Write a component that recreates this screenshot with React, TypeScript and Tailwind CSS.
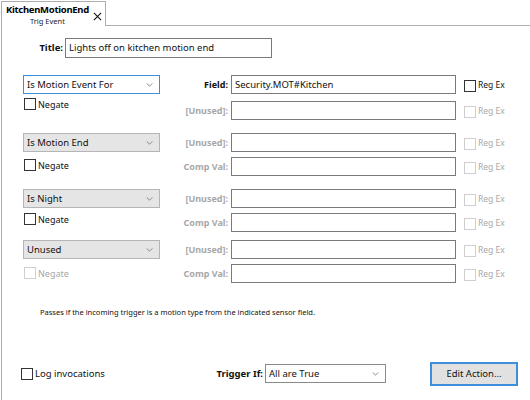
import React from 'react';

type Cond = {
  op: string;
  active?: boolean;
  negDisabled?: boolean;
  l1: string;
  l2: string;
  l1On?: boolean;
  v1?: string;
  gap: string;
  rowGap: string;
  negOffset: string;
};

const conds: Cond[] = [
  { op: 'Is Motion Event For', active: true, l1: 'Field:', l2: '[Unused]:', l1On: true, v1: 'Security.MOT#Kitchen', gap: 'mt-[17px]', rowGap: 'gap-[7px]', negOffset: 'mt-[4px]' },
  { op: 'Is Motion End', l1: '[Unused]:', l2: 'Comp Val:', gap: 'mt-[13px]', rowGap: 'gap-[5px]', negOffset: 'mt-[7px]' },
  { op: 'Is Night', l1: '[Unused]:', l2: 'Comp Val:', gap: 'mt-[13px]', rowGap: 'gap-[5px]', negOffset: 'mt-[5px]' },
  { op: 'Unused', negDisabled: true, l1: '[Unused]:', l2: 'Comp Val:', gap: 'mt-[8px]', rowGap: 'gap-[5px]', negOffset: 'mt-[8px]' },
];

function Chevron() {
  return (
    <svg viewBox="0 0 8 5" className="w-[7px] h-[4px]" fill="none" stroke="#707070" strokeWidth="1">
      <path d="M0.5 0.5 L4 4 L7.5 0.5" />
    </svg>
  );
}

function Check({ disabled, label, size = 'text-[9px]' }: { disabled?: boolean; label: string; size?: string }) {
  return (
    <div className="flex items-center gap-[2px]">
      <div className={`w-[12px] h-[12px] border bg-white ${disabled ? 'border-[#cfcfcf]' : 'border-[#333333]'}`} />
      <span className={`${size} ${disabled ? 'text-[#a8a8a8]' : 'text-[#111]'}`}>{label}</span>
    </div>
  );
}

function Select({ value, active, white, width }: { value: string; active?: boolean; white?: boolean; width: string }) {
  return (
    <div
      className={`${width} shrink-0 h-[19px] flex items-center justify-between pl-[3px] pr-[6px] border ${
        active ? 'bg-white border-[#3c8fd8]' : white ? 'bg-white border-[#8a8a8a]' : 'bg-[#e5e5e5] border-[#b5b5b5]'
      }`}
    >
      <span className="text-[#111] text-[9.5px]">{value}</span>
      <Chevron />
    </div>
  );
}

function Field({ label, on, value }: { label: string; on?: boolean; value?: string }) {
  return (
    <div className="flex items-center">
      <div className={`w-[71px] pr-[3px] text-right font-bold text-[9px] ${on ? 'text-[#111]' : 'text-[#a8a8a8]'}`}>{label}</div>
      <div className="w-[225px] h-[19px] border border-[#7a7a7a] bg-white px-[3px] flex items-center text-[#111] text-[9.5px]">{value}</div>
      <div className="ml-[8px] mt-[2px]">
        <Check label="Reg Ex" disabled={!on} size="text-[8.5px]" />
      </div>
    </div>
  );
}

export default function App() {
  return (
    <div className="w-[530px] h-[400px] bg-white overflow-hidden flex flex-col text-[9px] leading-none" style={{ fontFamily: '"Noto Sans", "Open Sans", sans-serif' }}>
      {/* tab strip */}
      <div className="flex h-[26px] shrink-0">
        <div className="w-[105px] ml-[1px] mt-[1px] border-l border-t border-r border-[#adadad] bg-white flex items-start pl-[4px] pt-[3px]">
          <div className="flex flex-col items-center">
            <span className="font-bold text-[9.5px] tracking-[-0.3px] text-black">KitchenMotionEnd</span>
            <span className="text-[7.5px] text-[#222] mt-[3px]">Trig Event</span>
          </div>
          <svg viewBox="0 0 10 10" className="w-[9px] h-[9px] mt-[7px] ml-[4px]" stroke="#111" strokeWidth="1.2">
            <path d="M1 1 L9 9 M9 1 L1 9" />
          </svg>
        </div>
        <div className="flex-1 border-b border-[#adadad]" />
      </div>

      {/* panel */}
      <div className="flex-1 ml-[1px] border-l border-[#adadad] flex flex-col">
        <div className="flex items-center mt-[12px]">
          <div className="w-[63px] pr-[2px] text-right font-bold text-[9.5px] text-[#111]">Title:</div>
          <div className="w-[207px] h-[20px] border border-[#7a7a7a] px-[3px] flex items-center text-[#111] text-[9.5px]">Lights off on kitchen motion end</div>
        </div>

        {conds.map((c) => (
          <div key={c.op} className={`flex ${c.gap} ml-[21px]`}>
            <div className="w-[137px] flex flex-col">
              <Select value={c.op} active={c.active} width="w-[137px]" />
              <div className={`${c.negOffset} ml-[1px]`}>
                <Check label="Negate" disabled={c.negDisabled} />
              </div>
            </div>
            <div className={`flex flex-col ${c.rowGap}`}>
              <Field label={c.l1} on={c.l1On} value={c.v1} />
              <Field label={c.l2} />
            </div>
          </div>
        ))}

        <div className="ml-[38px] mt-[26px] text-[7.5px] text-[#111]">
          Passes if the incoming trigger is a motion type from the indicated sensor field.
        </div>

        <div className="flex items-center mt-[45px]">
          <div className="ml-[19px] w-[194px] shrink-0">
            <Check label="Log invocations" size="text-[9.5px]" />
          </div>
          <div className="w-[50px] shrink-0 whitespace-nowrap text-right font-bold text-[9.5px] text-[#111] pr-[2px]">Trigger If:</div>
          <Select value="All are True" width="w-[121px]" white />
          <button className="ml-[44px] shrink-0 w-[88px] h-[24px] border-2 border-[#3c8fd8] bg-[#e1e1e1] text-[#111] text-[9.5px]">
            Edit Action...
          </button>
        </div>
      </div>
    </div>
  );
}
